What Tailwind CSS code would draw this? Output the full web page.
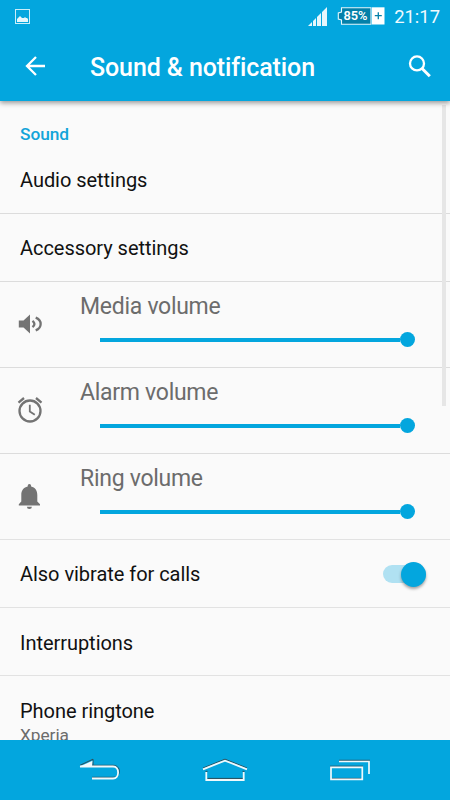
<!DOCTYPE html>
<html lang="en">

<head>
    <meta charset="UTF-8">
    <meta name="viewport" content="width=device-width, initial-scale=1.0">
    <title>Sound &amp; notification</title>
    <script src="https://cdn.jsdelivr.net/npm/@tailwindcss/browser@4"></script>
</head>

<body class="bg-[#fafafa] font-[Roboto,sans-serif]">
    <div class="relative flex flex-col w-[450px] h-[800px] overflow-hidden">

        <!-- Status bar + toolbar -->
        <header class="relative z-10 shrink-0 h-[101px] bg-[#03a6de] text-white shadow-[0_2px_5px_rgba(0,0,0,0.4)]">
            <div class="flex items-center h-8 pl-[15px] pr-[10px]">
                <svg class="w-[15px] h-[15px]" viewBox="0 0 15 15">
                    <rect x="0.5" y="0.5" width="14" height="14" fill="none" stroke="#c9edf9" />
                    <path d="M2 13V10L4 8L5 7L7 9H9L10 8L11 9H12L13 10V13Z" fill="#e4f6fc" />
                </svg>
                <svg class="ml-auto w-[19px] h-[19px]" viewBox="0 0 19 19" fill="#e6f6fc">
                    <path d="M0 19L4 15V19ZM5 19V14L8 11V19ZM9 19V10L13 6V19H10ZM14 19V5L19 0V19Z" />
                </svg>
                <!-- Battery -->
                <svg class="ml-[10px] w-[48px] h-[18px]" viewBox="0 0 48 18">
                    <path d="M4.5 0.8H34V17.2H4.5V13L1.3 12V6L4.5 5Z" fill="#0480a9" stroke="#e6f6fc" stroke-width="1.1" />
                    <rect x="35" y="0.3" width="12.5" height="17.2" fill="#fff" />
                    <path d="M41.3 5.2V12.2M37.8 8.7H44.8" stroke="#0480a9" stroke-width="1.3" />
                    <text x="6.5" y="13.2" textLength="24" lengthAdjust="spacingAndGlyphs" font-size="12.5" font-weight="600" fill="#fff">85%</text>
                </svg>
                <span class="ml-[9px] pt-0.5 text-[18.4px] leading-none font-normal text-[#f0fafe]">21:17</span>
            </div>
            <div class="flex items-center h-[69px] pl-[25px] pr-[19px]">
                <svg class="w-[21px] h-[20px] mb-0.5" viewBox="0 0 21 20" fill="none" stroke="#fff" stroke-width="2.3">
                    <path d="M20 10H2.5M11 1L2 10L11 19" />
                </svg>
                <h1 class="ml-[44px] pt-0.5 text-[25px] leading-none font-medium tracking-[-0.1px]">Sound &amp; notification</h1>
                <svg class="ml-auto w-[23px] h-[23px]" viewBox="0 0 23 23" fill="none" stroke="#fff">
                    <circle cx="9" cy="8.4" r="7" stroke-width="2.3" />
                    <path d="M13.8 13.2L21.8 21.2" stroke-width="3" />
                </svg>
            </div>
        </header>

        <!-- Settings list -->
        <main class="relative flex-1 min-h-0 overflow-hidden text-[20px] tracking-[-0.04px] text-[#111]">
            <h2 class="h-[45px] pt-[23px] pl-5 text-[17.3px] leading-5 font-medium text-[#12a4d9]">Sound</h2>
            <div class="flex items-center h-[68px] pl-5 pt-px border-b border-[#dcdcdc]">Audio settings</div>
            <div class="flex items-center h-[68px] pl-5 pt-px border-b border-[#dcdcdc]">Accessory settings</div>

            <div class="flex h-[86px] border-b border-[#dcdcdc]">
                <svg class="ml-[18px] mt-[30px] w-[24px] h-[24px]" viewBox="0 0 24 24">
                    <path d="M0.8 8.5H5.5L12 2.5V21.5L5.5 15.5H0.8Z" fill="#737373" />
                    <path d="M14.5 8.8Q18.4 12 14.5 15.2M17.7 5.6C24.3 8.2 24.3 15.8 17.7 18.4" fill="none" stroke="#737373" stroke-width="2.3" />
                </svg>
                <div class="ml-[38px]">
                    <p class="mt-[11px] text-[23px] leading-7 tracking-[-0.28px] text-[#6c6c6c]">Media volume</p>
                    <div class="flex items-center mt-[11px] ml-5">
                        <div class="w-[300px] h-1 bg-[#03a6de]"></div>
                        <div class="w-[15px] h-[15px] rounded-full bg-[#03a6de]"></div>
                    </div>
                </div>
            </div>

            <div class="flex h-[86px] border-b border-[#dcdcdc]">
                <svg class="ml-[17px] mt-[28px] w-[26px] h-[27px]" viewBox="0 0 26 27" fill="none" stroke="#737373">
                    <circle cx="13" cy="15" r="10.5" stroke-width="2.3" />
                    <path d="M1.5 6.6L7 2M24.5 6.6L19 2" stroke-width="2.3" />
                    <path d="M12.8 8.8V15.5L17.8 18.8" stroke-width="1.8" />
                </svg>
                <div class="ml-[37px]">
                    <p class="mt-[11px] text-[23px] leading-7 tracking-[-0.28px] text-[#6c6c6c]">Alarm volume</p>
                    <div class="flex items-center mt-[11px] ml-5">
                        <div class="w-[300px] h-1 bg-[#03a6de]"></div>
                        <div class="w-[15px] h-[15px] rounded-full bg-[#03a6de]"></div>
                    </div>
                </div>
            </div>

            <div class="flex h-[86px] border-b border-[#e2e2e2]">
                <svg class="ml-[18px] mt-[30px] w-[23px] h-[26px]" viewBox="0 0 23 26" fill="#737373">
                    <path d="M0.8 21.5V20.2L3.3 17.5V11C3.3 6.5 5.8 3.5 9.7 2.6V1.8A1.7 1.7 0 0 1 13.1 1.8V2.6C17 3.5 19.3 6.5 19.3 11V17.5L22 20.2V21.5Z" />
                    <path d="M8.9 22.8H13.9A2.5 2.3 0 0 1 8.9 22.8Z" />
                </svg>
                <div class="ml-[39px]">
                    <p class="mt-[11px] text-[23px] leading-7 tracking-[-0.28px] text-[#6c6c6c]">Ring volume</p>
                    <div class="flex items-center mt-[11px] ml-5">
                        <div class="w-[300px] h-1 bg-[#03a6de]"></div>
                        <div class="w-[15px] h-[15px] rounded-full bg-[#03a6de]"></div>
                    </div>
                </div>
            </div>

            <div class="flex items-center justify-between h-[68px] pl-5 pr-6 pt-px border-b border-[#e2e2e2]">
                <span>Also vibrate for calls</span>
                <div class="flex items-center justify-end w-[43px] h-[18px] rounded-full bg-[#b0e1f2]">
                    <div class="shrink-0 w-[25px] h-[25px] rounded-full bg-[#03a6de] shadow-[0_2px_3px_rgba(0,0,0,0.35)]"></div>
                </div>
            </div>
            <div class="flex items-center h-[68px] pl-5 pt-0.5 border-b border-[#e2e2e2]">Interruptions</div>
            <div class="pt-[23px] pl-5">
                <p class="leading-6">Phone ringtone</p>
                <p class="mt-0.5 text-[17.3px] leading-5 text-[#6c6c6c]">Xperia</p>
            </div>

            <!-- Scrollbar -->
            <div class="absolute top-1 right-1 w-1 h-[301px] bg-[#e6e6e6]"></div>
        </main>

        <!-- Navigation bar -->
        <nav class="flex shrink-0 items-center justify-between h-[60px] px-[79px] bg-[#03a6de]">
            <svg class="w-[42px] h-[24px]" viewBox="0 0 42 24" fill="none">
                <path d="M1 7.3L14 1.2V7M13 7.3H34C42.5 7.3 42.5 19.3 34 19.3H13" stroke="#304c56" stroke-width="1" />
                <path d="M0.5 8.5L13.5 2.8L13 8.5Z" fill="#f0f9fc" />
                <path d="M1 8.5H34C40.8 8.5 40.8 20.5 34 20.5H13" stroke="#f0f9fc" stroke-width="1.8" />
            </svg>
            <svg class="w-[46px] h-[24px]" viewBox="0 0 46 24" fill="none">
                <path d="M1 10L23 1.2L45 10M5.5 20.4H41.5M3.5 13.3H5.5M40.5 13.3H42.5" stroke="#304c56" stroke-width="1" />
                <path d="M1 11.3L23 2.6L45 11.3M4.3 14V22H41.7V14" stroke="#f0f9fc" stroke-width="1.8" />
            </svg>
            <svg class="w-[42px] h-[24px]" viewBox="0 0 42 24" fill="none">
                <path d="M10 2.3H41M1 8.2H34M3 20.4H32" stroke="#304c56" stroke-width="1" />
                <path d="M10 3.5H40V16M2 9.3H33.3V21.3H2Z" stroke="#f0f9fc" stroke-width="1.7" />
            </svg>
        </nav>
    </div>
</body>

</html>
